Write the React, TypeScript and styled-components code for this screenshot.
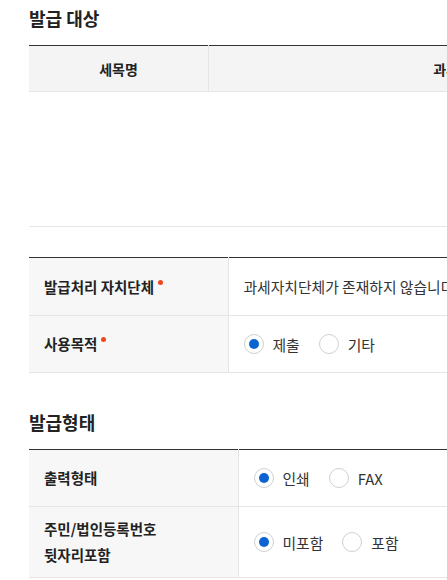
import styled, { createGlobalStyle } from "styled-components";

const GlobalStyle = createGlobalStyle`
  html, body {
    margin: 0;
    padding: 0;
    background: #fff;
    overflow: hidden;
  }
  body {
    font-family: "Noto Sans CJK KR", "Noto Sans", sans-serif;
    color: #222;
  }
`;

const Page = styled.div`
  width: 1000px;
  padding: 5px 0 0 29px;
`;

const SectionTitle = styled.h2<{ $top?: number }>`
  margin: ${(props) => props.$top ?? 0}px 0 13px;
  font-size: 18px;
  line-height: 27px;
  font-weight: 700;
  color: #222;
`;

const Table = styled.table<{ $gap?: number }>`
  width: 100%;
  border-collapse: collapse;
  border-top: 1px solid #333;
  margin-top: ${(props) => props.$gap ?? 0}px;
  table-layout: fixed;
`;

const HeadCell = styled.th<{ $width?: number }>`
  width: ${(props) => (props.$width ? `${props.$width}px` : "auto")};
  height: 45px;
  padding: 0;
  font-size: 14px;
  font-weight: 700;
  text-align: center;
  background-color: #f4f4f4;
  border-bottom: 1px solid #e5e5e5;
  border-left: 1px solid #e5e5e5;

  &:first-child {
    border-left: none;
  }
`;

const EmptyCell = styled.td`
  height: 134px;
  padding: 0;
  border-bottom: 1px solid #e5e5e5;
`;

const Row = styled.tr<{ $height: number }>`
  height: ${(props) => props.$height}px;
  border-bottom: 1px solid #e5e5e5;
`;

const LabelCell = styled.th<{ $width: number; $required?: boolean }>`
  width: ${(props) => props.$width}px;
  padding: 0 15px;
  font-size: 14.5px;
  line-height: 26px;
  font-weight: 700;
  text-align: left;
  color: #222;
  background-color: #f7f7f7;
  border-right: 1px solid #e5e5e5;
  box-sizing: border-box;

  ${(props) =>
    props.$required &&
    `
    &::after {
      content: "";
      display: inline-block;
      width: 5px;
      height: 5px;
      margin-left: 4px;
      border-radius: 50%;
      background-color: #f0461e;
      vertical-align: 8px;
    }
  `}
`;

const ValueCell = styled.td`
  padding: 0 15px;
  font-size: 14.8px;
  color: #333;
`;

const RadioGroup = styled.div`
  display: flex;
  align-items: center;
  gap: 19px;
`;

const RadioItem = styled.label`
  display: flex;
  align-items: center;
  gap: 9px;
  font-size: 14.8px;
  color: #333;
`;

const RadioCircle = styled.span<{ $checked?: boolean }>`
  width: 20px;
  height: 20px;
  border: 1px solid #d0d0d0;
  border-radius: 50%;
  box-sizing: border-box;
  display: flex;
  align-items: center;
  justify-content: center;
  background: #fff;

  &::after {
    content: "";
    width: 10px;
    height: 10px;
    border-radius: 50%;
    background-color: ${(props) => (props.$checked ? "#0b63d1" : "transparent")};
  }
`;

type Option = { label: string; checked?: boolean };

function Radios({ options }: { options: Option[] }) {
  return (
    <RadioGroup>
      {options.map((opt) => (
        <RadioItem key={opt.label}>
          <RadioCircle $checked={opt.checked} />
          {opt.label}
        </RadioItem>
      ))}
    </RadioGroup>
  );
}

export default function App() {
  return (
    <>
      <GlobalStyle />
      <Page>
        <SectionTitle>발급 대상</SectionTitle>
        <Table>
          <thead>
            <tr>
              <HeadCell $width={179}>세목명</HeadCell>
              <HeadCell $width={500}>과세대상</HeadCell>
              <HeadCell>납부금액</HeadCell>
            </tr>
          </thead>
          <tbody>
            <tr>
              <EmptyCell colSpan={3} />
            </tr>
          </tbody>
        </Table>

        <Table $gap={30}>
          <tbody>
            <Row $height={58}>
              <LabelCell $width={199} $required>
                발급처리 자치단체
              </LabelCell>
              <ValueCell>과세자치단체가 존재하지 않습니다.</ValueCell>
            </Row>
            <Row $height={57}>
              <LabelCell $width={199} $required>
                사용목적
              </LabelCell>
              <ValueCell>
                <Radios options={[{ label: "제출", checked: true }, { label: "기타" }]} />
              </ValueCell>
            </Row>
          </tbody>
        </Table>

        <SectionTitle $top={36}>발급형태</SectionTitle>
        <Table>
          <tbody>
            <Row $height={57}>
              <LabelCell $width={209}>출력형태</LabelCell>
              <ValueCell>
                <Radios options={[{ label: "인쇄", checked: true }, { label: "FAX" }]} />
              </ValueCell>
            </Row>
            <Row $height={71}>
              <LabelCell $width={209}>
                주민/법인등록번호
                <br />
                뒷자리포함
              </LabelCell>
              <ValueCell>
                <Radios options={[{ label: "미포함", checked: true }, { label: "포함" }]} />
              </ValueCell>
            </Row>
          </tbody>
        </Table>
      </Page>
    </>
  );
}
